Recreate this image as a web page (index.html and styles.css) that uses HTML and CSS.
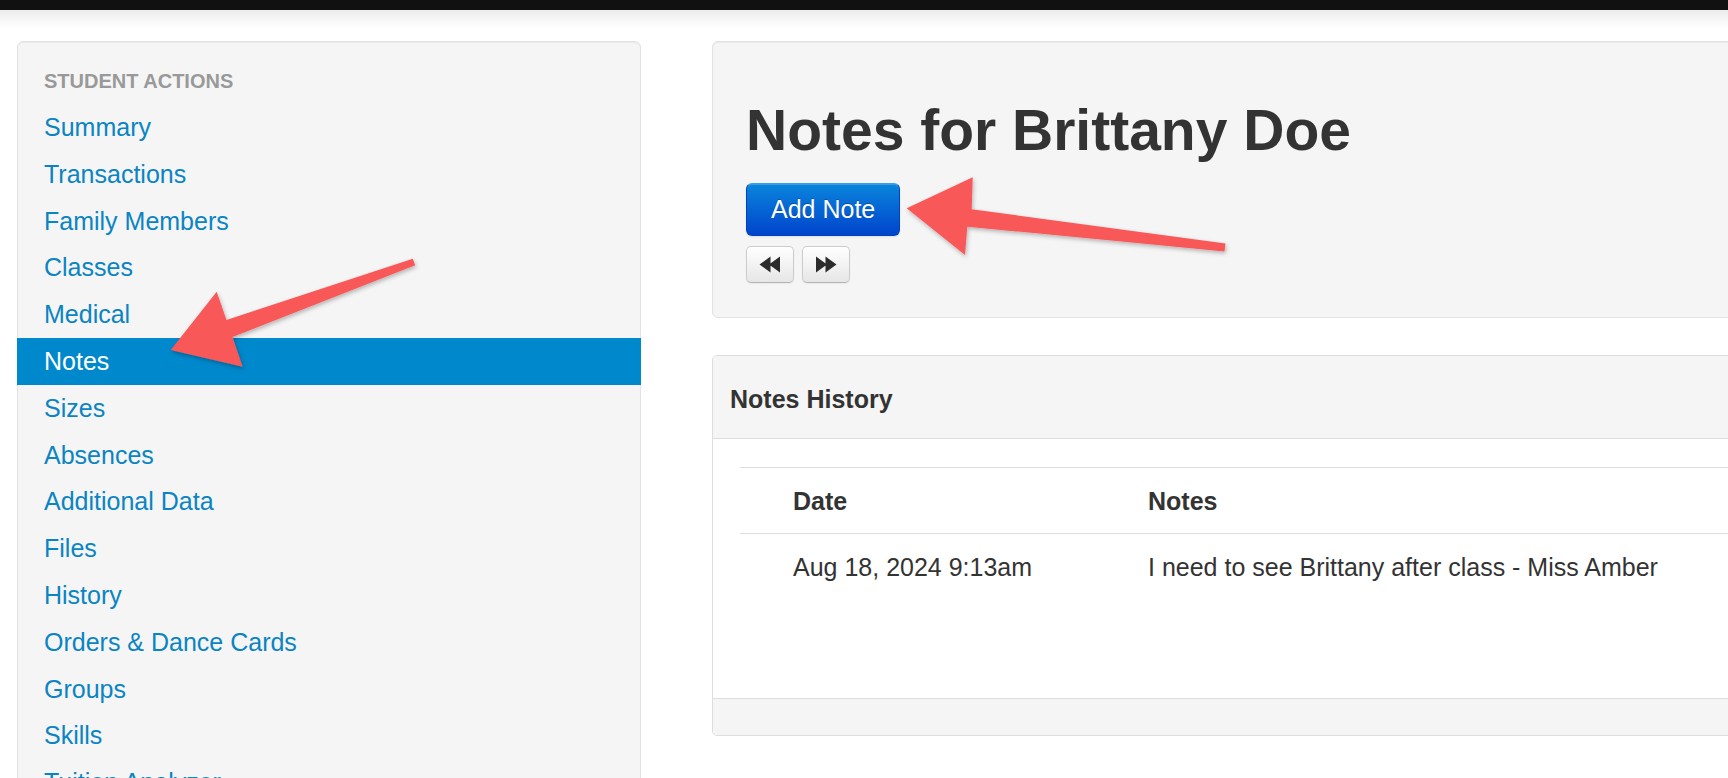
FILE: index.html
```html
<!DOCTYPE html>
<html lang="en">
<head>
    <meta charset="UTF-8">
    <meta name="viewport" content="width=device-width, initial-scale=1.0">
    <title>Notes for Brittany Doe</title>
    <link rel="stylesheet" href="styles.css">
</head>
<body>
    <div class="topbar"></div>
    <div class="topfade"></div>

    <div class="layout">
        <aside class="sidebar">
            <ul class="nav-list">
                <li class="nav-header">Student Actions</li>
                <li><a href="#">Summary</a></li>
                <li><a href="#">Transactions</a></li>
                <li><a href="#">Family Members</a></li>
                <li><a href="#">Classes</a></li>
                <li><a href="#">Medical</a></li>
                <li class="active"><a href="#">Notes</a></li>
                <li><a href="#">Sizes</a></li>
                <li><a href="#">Absences</a></li>
                <li><a href="#">Additional Data</a></li>
                <li><a href="#">Files</a></li>
                <li><a href="#">History</a></li>
                <li><a href="#">Orders &amp; Dance Cards</a></li>
                <li><a href="#">Groups</a></li>
                <li><a href="#">Skills</a></li>
                <li><a href="#">Tuition Analyzer</a></li>
                <li><a href="#">Reports</a></li>
            </ul>
        </aside>

        <main class="content">
            <div class="hero">
                <h1>Notes for Brittany Doe</h1>
                <button type="button" class="btn btn-primary">Add Note</button>
                <div class="pager">
                    <button type="button" class="btn btn-small" title="Previous">
                        <svg width="22" height="17" viewBox="0 0 22 17"><path d="M0.5 8.5 L11.5 0.5 V16.5 Z M10 8.5 L21 0.5 V16.5 Z" fill="#2b2b2b"/></svg>
                    </button>
                    <button type="button" class="btn btn-small" title="Next">
                        <svg width="22" height="17" viewBox="0 0 22 17"><path d="M21.5 8.5 L10.5 0.5 V16.5 Z M12 8.5 L1 0.5 V16.5 Z" fill="#2b2b2b"/></svg>
                    </button>
                </div>
            </div>

            <div class="panel">
                <div class="panel-heading">Notes History</div>
                <div class="panel-body">
                    <table class="table">
                        <thead>
                            <tr>
                                <th class="col-actions"></th>
                                <th class="col-date">Date</th>
                                <th>Notes</th>
                            </tr>
                        </thead>
                        <tbody>
                            <tr>
                                <td></td>
                                <td>Aug 18, 2024 9:13am</td>
                                <td>I need to see Brittany after class - Miss Amber</td>
                            </tr>
                        </tbody>
                    </table>
                </div>
                <div class="panel-footer"></div>
            </div>
        </main>
    </div>

    <!-- red callout arrows drawn on top of the page -->
    <svg class="callouts" width="1728" height="778" viewBox="0 0 1728 778">
        <defs>
            <filter id="arrowShadow" x="-10%" y="-20%" width="130%" height="150%">
                <feDropShadow dx="1" dy="2" stdDeviation="2" flood-color="#000" flood-opacity="0.28"/>
            </filter>
        </defs>
        <polygon class="arrow" filter="url(#arrowShadow)"
            points="412.8,258.7 226.5,320 216.7,291.7 170.7,350 242.7,366.7 232.5,337 415.2,265.3"/>
        <polygon class="arrow" filter="url(#arrowShadow)"
            points="1225.5,243.5 971.7,209.3 972.7,177.3 906.7,208.3 965,255 967.3,226.7 1224.5,251.5"/>
    </svg>
</body>
</html>
```

FILE: styles.css
```css
html, body {
    height: 778px;
    overflow: hidden;
}
body {
    font-family: "Liberation Sans", Arial, Helvetica, sans-serif;
    font-size: 25px;
    color: #333;
    background-color: #fff;
    margin: 0;
    position: relative;
}
.topbar {
    height: 10px;
    background-color: #111;
}
.topfade {
    height: 18px;
    background: linear-gradient(#ececec, #fff);
}
.layout {
    display: flex;
    align-items: flex-start;
    gap: 71px;
    padding: 13px 0 0 17px;
    width: max-content;
}

/* sidebar */
.sidebar {
    flex: 0 0 624px;
    box-sizing: border-box;
    background-color: #f5f5f5;
    border: 1px solid #e3e3e3;
    border-radius: 6px;
    box-shadow: inset 0 1px 1px rgba(0, 0, 0, 0.05);
    padding: 25px 0 20px;
}
.nav-list {
    list-style: none;
    margin: 0;
    padding: 0;
}
.nav-header {
    font-size: 20px;
    line-height: 28px;
    font-weight: bold;
    text-transform: uppercase;
    color: #999;
    padding: 0 26px;
    margin-bottom: 9px;
}
.nav-list a {
    display: block;
    padding: 6px 26px;
    line-height: 34.8px;
    color: #0a84c2;
    text-decoration: none;
}
.nav-list .active a {
    background-color: #0088cc;
    color: #fff;
    margin: 0 -1px;
    padding-left: 27px;
}

/* main column */
.content {
    flex: 0 0 1150px;
}
.hero {
    background-color: #f5f5f5;
    border: 1px solid #e3e3e3;
    border-radius: 6px;
    box-shadow: inset 0 1px 1px rgba(0, 0, 0, 0.05);
    padding: 57px 33px 34px;
}
.hero h1 {
    margin: 0 0 21px;
    font-size: 57px;
    line-height: 63px;
    font-weight: bold;
    color: #333;
}
.btn {
    font-family: inherit;
    cursor: pointer;
    box-sizing: border-box;
}
.btn-primary {
    display: block;
    height: 53px;
    padding: 0 24px;
    font-size: 25px;
    line-height: 51px;
    color: #fff;
    text-shadow: 0 -1px 0 rgba(0, 0, 0, 0.25);
    background: linear-gradient(#0a85dc, #0044cc);
    border: 1px solid #0044b8;
    border-top-color: #3aa0e6;
    border-radius: 6px;
    box-shadow: inset 0 1px 0 rgba(255, 255, 255, 0.2), 0 1px 2px rgba(0, 0, 0, 0.1);
}
.pager {
    display: flex;
    gap: 8px;
    margin-top: 10px;
}
.btn-small {
    width: 48px;
    height: 37px;
    padding: 0;
    display: flex;
    align-items: center;
    justify-content: center;
    background: linear-gradient(#fff, #e6e6e6);
    border: 1px solid #ccc;
    border-bottom-color: #b3b3b3;
    border-radius: 5px;
    box-shadow: inset 0 1px 0 rgba(255, 255, 255, 0.2), 0 1px 2px rgba(0, 0, 0, 0.05);
}

/* notes history panel */
.panel {
    margin-top: 37px;
    border: 1px solid #ddd;
    border-radius: 5px;
    background-color: #fff;
    overflow: hidden;
}
.panel-heading {
    background-color: #f5f5f5;
    border-bottom: 1px solid #ddd;
    padding: 26px 17px 22px;
    line-height: 34px;
    font-weight: bold;
}
.panel-body {
    padding: 28px 27px 99px;
}
.panel-footer {
    height: 36px;
    background-color: #f5f5f5;
    border-top: 1px solid #ddd;
}
.table {
    width: 100%;
    table-layout: fixed;
    border-collapse: collapse;
}
.table th,
.table td {
    box-sizing: border-box;
    text-align: left;
    padding: 16px 16px 15px;
    line-height: 34px;
    border-top: 1px solid #ddd;
}
.table th {
    font-weight: bold;
}
.col-actions {
    width: 37px;
}
.col-date {
    width: 355px;
}

/* callout overlay */
.callouts {
    position: absolute;
    top: 0;
    left: 0;
    pointer-events: none;
}
.arrow {
    fill: #f95858;
}
```
